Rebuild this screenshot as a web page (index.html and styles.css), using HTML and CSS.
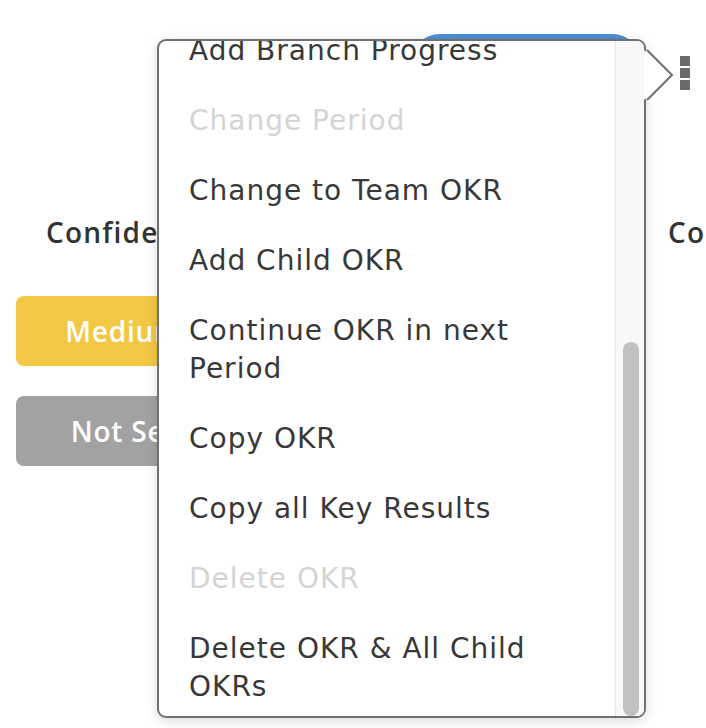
FILE: index.html
```html
<!DOCTYPE html>
<html lang="en">
<head>
<meta charset="utf-8">
<title>OKR menu</title>
<link rel="stylesheet" href="styles.css">
</head>
<body>
<div class="page">
  <header class="topbar">
    <div class="primary-btn" aria-label="Check-in"></div>
    <div class="kebab" aria-label="More actions"><span></span><span></span><span></span></div>
  </header>

  <section class="fields">
    <div class="field field-confidence">
      <div class="field-label">Confidence</div>
      <div class="pill pill-medium">Medium</div>
      <div class="pill pill-notset">Not Set</div>
    </div>
    <div class="field field-next">
      <div class="field-label">Contributors</div>
    </div>
  </section>

  <div class="menu-wrap">
    <div class="menu">
      <ul class="menu-list">
        <li class="menu-item">Add Branch Progress</li>
        <li class="menu-item is-disabled">Change Period</li>
        <li class="menu-item">Change to Team OKR</li>
        <li class="menu-item">Add Child OKR</li>
        <li class="menu-item">Continue OKR in next Period</li>
        <li class="menu-item">Copy OKR</li>
        <li class="menu-item">Copy all Key Results</li>
        <li class="menu-item is-disabled">Delete OKR</li>
        <li class="menu-item">Delete OKR &amp; All Child OKRs</li>
      </ul>
      <div class="scroll-track"><div class="scroll-thumb"></div></div>
    </div>
    <svg class="menu-arrow" width="32" height="56" viewBox="0 0 32 56" aria-hidden="true">
      <polygon points="0,2 28,27 0,52" fill="#ffffff"/>
      <polyline points="3,2 28,27 3,52" fill="none" stroke="#6f6f6f" stroke-width="2" stroke-linejoin="miter"/>
    </svg>
  </div>
</div>
</body>
</html>
```
FILE: styles.css
```css
* { box-sizing: border-box; }

html, body {
  margin: 0;
  padding: 0;
  background: #ffffff;
}

body {
  width: 706px;
  height: 728px;
  overflow: hidden;
  font-family: "DejaVu Sans", "Noto Sans", sans-serif;
  color: #383838;
}

.page {
  position: relative;
  width: 706px;
  height: 728px;
}

/* ---------- underlying page ---------- */
.topbar {
  display: flex;
  justify-content: flex-end;
  align-items: flex-start;
  padding: 34px 16px 0 0;
  height: 94px;
}

.primary-btn {
  width: 232px;
  height: 60px;
  border-radius: 30px;
  background: #4b8fd5;
  margin-right: 38px;
}

.kebab {
  display: flex;
  flex-direction: column;
  gap: 2px;
  margin-top: 22px;
}

.kebab span {
  display: block;
  width: 10px;
  height: 10px;
  background: #6b6b6b;
}

.fields {
  display: flex;
  padding: 0 0 0 16px;
  margin-top: 119px;
}

.field-confidence {
  width: 215px;
  flex: none;
}

.field-next {
  margin-left: 437px;
  white-space: nowrap;
}

.field-label {
  font-family: "Open Sans", "DejaVu Sans", sans-serif;
  font-size: 28px;
  line-height: 38px;
  font-weight: 600;
  letter-spacing: 1.2px;
  color: #333333;
}

.field-confidence .field-label {
  padding-left: 30px;
}

.pill {
  height: 70px;
  line-height: 70px;
  border-radius: 8px;
  text-align: center;
  font-family: "Open Sans", "DejaVu Sans", sans-serif;
  font-size: 28px;
  font-weight: 600;
  letter-spacing: 0.8px;
  color: #ffffff;
}

.pill-medium {
  margin-top: 45px;
  background: #f2c744;
}

.pill-notset {
  margin-top: 30px;
  background: #a2a2a2;
}

/* ---------- popup menu ---------- */
.menu-wrap {
  position: absolute;
  left: 157px;
  top: 39px;
  width: 489px;
  height: 679px;
}

.menu {
  display: flex;
  width: 100%;
  height: 100%;
  border: 2px solid #707070;
  border-radius: 9px;
  background: #ffffff;
  overflow: hidden;
  box-shadow: 0 3px 12px rgba(0, 0, 0, 0.14);
}

.menu-list {
  flex: 1;
  display: flex;
  flex-direction: column;
  justify-content: flex-end;
  gap: 8px;
  list-style: none;
  margin: 0;
  padding: 0 32px 0 30px;
  overflow: hidden;
}

.menu-item {
  flex: none;
  padding: 14px 0 10px;
  font-size: 28px;
  line-height: 38px;
  letter-spacing: 1px;
  color: #383838;
}

.menu-item.is-disabled {
  color: #d4d4d4;
}

.scroll-track {
  flex: none;
  width: 29px;
  display: flex;
  flex-direction: column;
  justify-content: flex-end;
  padding: 0 5px 0 7px;
  background: #f8f8f8;
  border-left: 1px solid #e6e6e6;
}

.scroll-thumb {
  height: 374px;
  border-radius: 8px;
  background: #c1c1c1;
}

.menu-arrow {
  position: absolute;
  left: calc(100% - 2px);
  top: 9px;
  display: block;
}
```
